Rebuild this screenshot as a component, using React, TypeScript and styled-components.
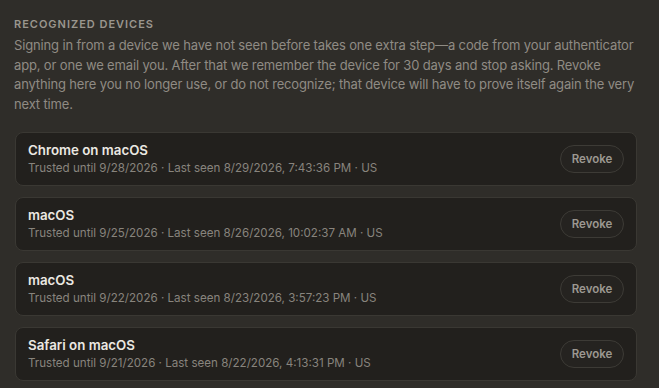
import React from "react";
import styled, { createGlobalStyle } from "styled-components";

const Global = createGlobalStyle`
  html, body { margin: 0; padding: 0; background: #2f2d29; }
  body { font-family: Inter, "Noto Sans", sans-serif; -webkit-font-smoothing: antialiased; }
`;

const Section = styled.section`
  padding: 16px 22px 8px 14px;
  display: flex;
  flex-direction: column;
`;

const Heading = styled.h2`
  margin: 0;
  font-size: 11px;
  line-height: 16px;
  font-weight: 600;
  letter-spacing: 0.09em;
  text-transform: uppercase;
  color: #9a968e;
`;

const Description = styled.p`
  margin: 4px 0 0;
  font-size: 13px;
  line-height: 19.5px;
  letter-spacing: -0.15px;
  color: #8f8b84;
`;

const List = styled.ul`
  list-style: none;
  margin: 18px 0 0;
  padding: 0;
  display: flex;
  flex-direction: column;
  gap: 11px;
`;

const Card = styled.li`
  display: flex;
  align-items: center;
  justify-content: space-between;
  height: 54px;
  box-sizing: border-box;
  padding: 0 12px 0 12px;
  margin-left: 1px;
  background: #22201d;
  border: 1px solid #3a3833;
  border-radius: 8px;
`;

const Info = styled.div`
  display: flex;
  flex-direction: column;
  gap: 2px;
`;

const Title = styled.div`
  font-size: 13.3px;
  line-height: 17px;
  font-weight: 600;
  color: #ebe8e2;
`;

const Meta = styled.div`
  font-size: 11.6px;
  line-height: 15px;
  color: #88847d;
`;

const RevokeButton = styled.button`
  height: 28px;
  width: 64px;
  border-radius: 999px;
  border: 1px solid #3d3b36;
  background: #252320;
  color: #9c9891;
  font-family: inherit;
  font-size: 11.5px;
  font-weight: 600;
  padding: 0;
  cursor: pointer;
`;

const devices = [
  { name: "Chrome on macOS", trusted: "9/28/2026", seen: "8/29/2026, 7:43:36 PM" },
  { name: "macOS", trusted: "9/25/2026", seen: "8/26/2026, 10:02:37 AM" },
  { name: "macOS", trusted: "9/22/2026", seen: "8/23/2026, 3:57:23 PM" },
  { name: "Safari on macOS", trusted: "9/21/2026", seen: "8/22/2026, 4:13:31 PM" },
];

export default function App() {
  return (
    <>
      <Global />
      <Section>
        <Heading>Recognized devices</Heading>
        <Description>
          Signing in from a device we have not seen before takes one extra step—a code from your
          authenticator app, or one we email you. After that we remember the device for 30 days and
          stop asking. Revoke anything here you no longer use, or do not recognize; that device will
          have to prove itself again the very next time.
        </Description>
        <List>
          {devices.map((d, i) => (
            <Card key={i}>
              <Info>
                <Title>{d.name}</Title>
                <Meta>
                  Trusted until {d.trusted} · Last seen {d.seen} · US
                </Meta>
              </Info>
              <RevokeButton>Revoke</RevokeButton>
            </Card>
          ))}
        </List>
      </Section>
    </>
  );
}
